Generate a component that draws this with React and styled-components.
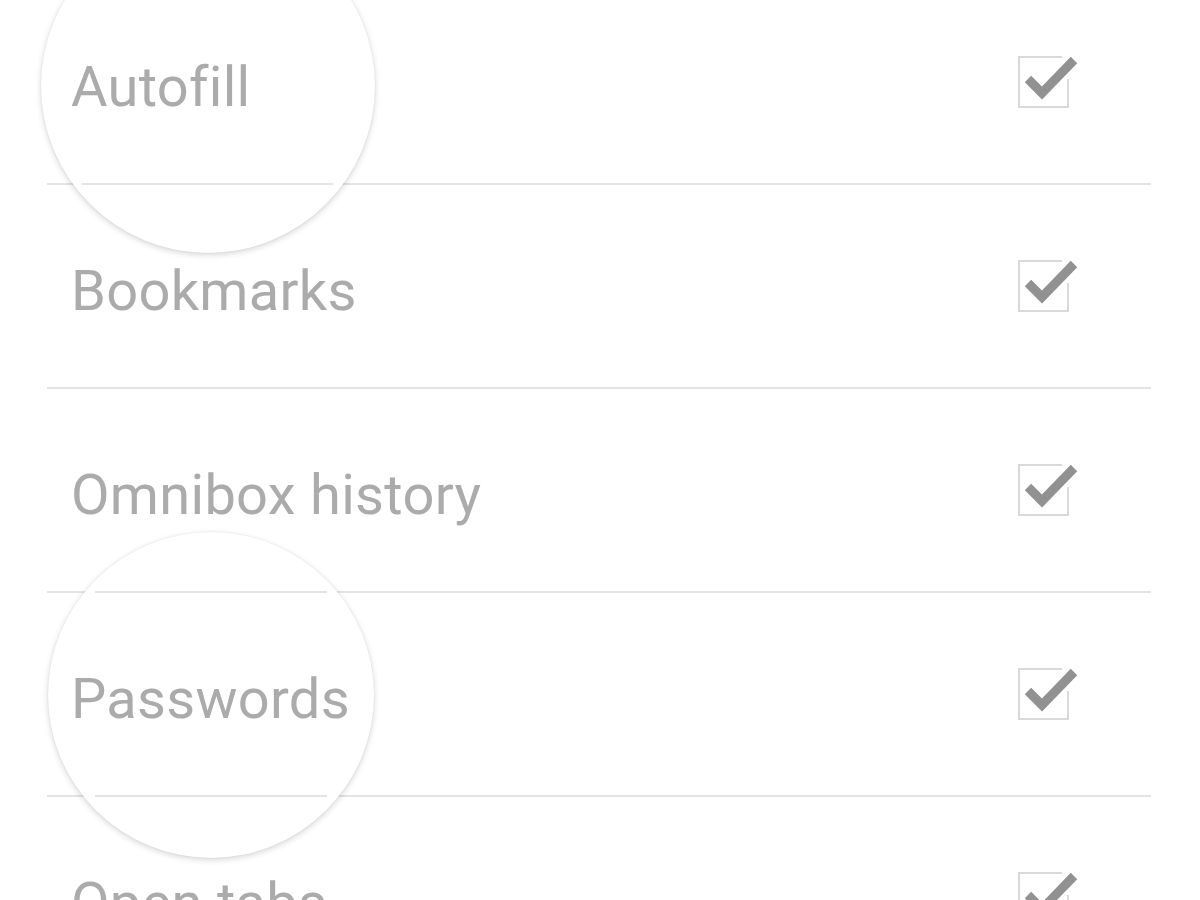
import * as React from "react";
import styled, { createGlobalStyle } from "styled-components";

const items = ["Autofill", "Bookmarks", "Omnibox history", "Passwords", "Open tabs"];

// magnifier lenses laid over the list
const lenses = [
  { left: 41, top: -81, size: 334, lines: [{ top: 264, left: 41, width: 251 }] },
  {
    left: 48,
    top: 532,
    size: 326,
    lines: [
      { top: 59, left: 47, width: 232 },
      { top: 263, left: 47, width: 232 },
    ],
  },
];

function CheckIcon() {
  return (
    <CheckSvg width="62" height="58" viewBox="0 0 62 58">
      <path d="M45 5 H2 V55 H51 V27" fill="none" stroke="#d9d9d9" strokeWidth="2" />
      <path d="M11 27 L25 41 L57 8" fill="none" stroke="#919191" strokeWidth="9" />
    </CheckSvg>
  );
}

function App() {
  return (
    <Page>
      <GlobalStyle />
      <List>
        {items.map((name) => (
          <Row key={name}>
            <Label>{name}</Label>
            <CheckIcon />
          </Row>
        ))}
      </List>
      {lenses.map((l, i) => (
        <Lens key={i} $left={l.left} $top={l.top} $size={l.size}>
          {l.lines.map((s, j) => (
            <LensLine key={j} $top={s.top} $left={s.left} $width={s.width} />
          ))}
        </Lens>
      ))}
    </Page>
  );
}

const GlobalStyle = createGlobalStyle`
  body {
    margin: 0;
    background: #ffffff;
    font-family: Roboto, "Liberation Sans", sans-serif;
  }
`;

const Page = styled.div`
  position: relative;
  width: 1200px;
  height: 900px;
  overflow: hidden;
  background: #ffffff;
`;

const List = styled.div`
  display: flex;
  flex-direction: column;
  margin: -19px 49px 0 47px;
`;

const Row = styled.div`
  display: flex;
  align-items: center;
  justify-content: space-between;
  height: 202px;
  flex-shrink: 0;
  padding: 0 72px 0 24px;
  border-bottom: 2px solid #e4e4e4;
`;

const Label = styled.div`
  position: relative;
  z-index: 2;
  font-size: 56px;
  line-height: 56px;
  padding-top: 9px;
  color: #ababab;
  letter-spacing: 0.3px;
  font-variant-ligatures: none;
`;

const CheckSvg = styled.svg`
  display: block;
  margin-top: -2px;
`;

const Lens = styled.div`
  position: absolute;
  z-index: 1;
  left: ${(p) => p.$left}px;
  top: ${(p) => p.$top}px;
  width: ${(p) => p.$size}px;
  height: ${(p) => p.$size}px;
  border-radius: 50%;
  background: #ffffff;
  box-shadow: 0 2px 6px rgba(0, 0, 0, 0.16), 0 0 2px rgba(0, 0, 0, 0.08);
`;

const LensLine = styled.div`
  position: absolute;
  top: ${(p) => p.$top}px;
  left: ${(p) => p.$left}px;
  width: ${(p) => p.$width}px;
  height: 2px;
  background: #e4e4e4;
`;

export default App;
